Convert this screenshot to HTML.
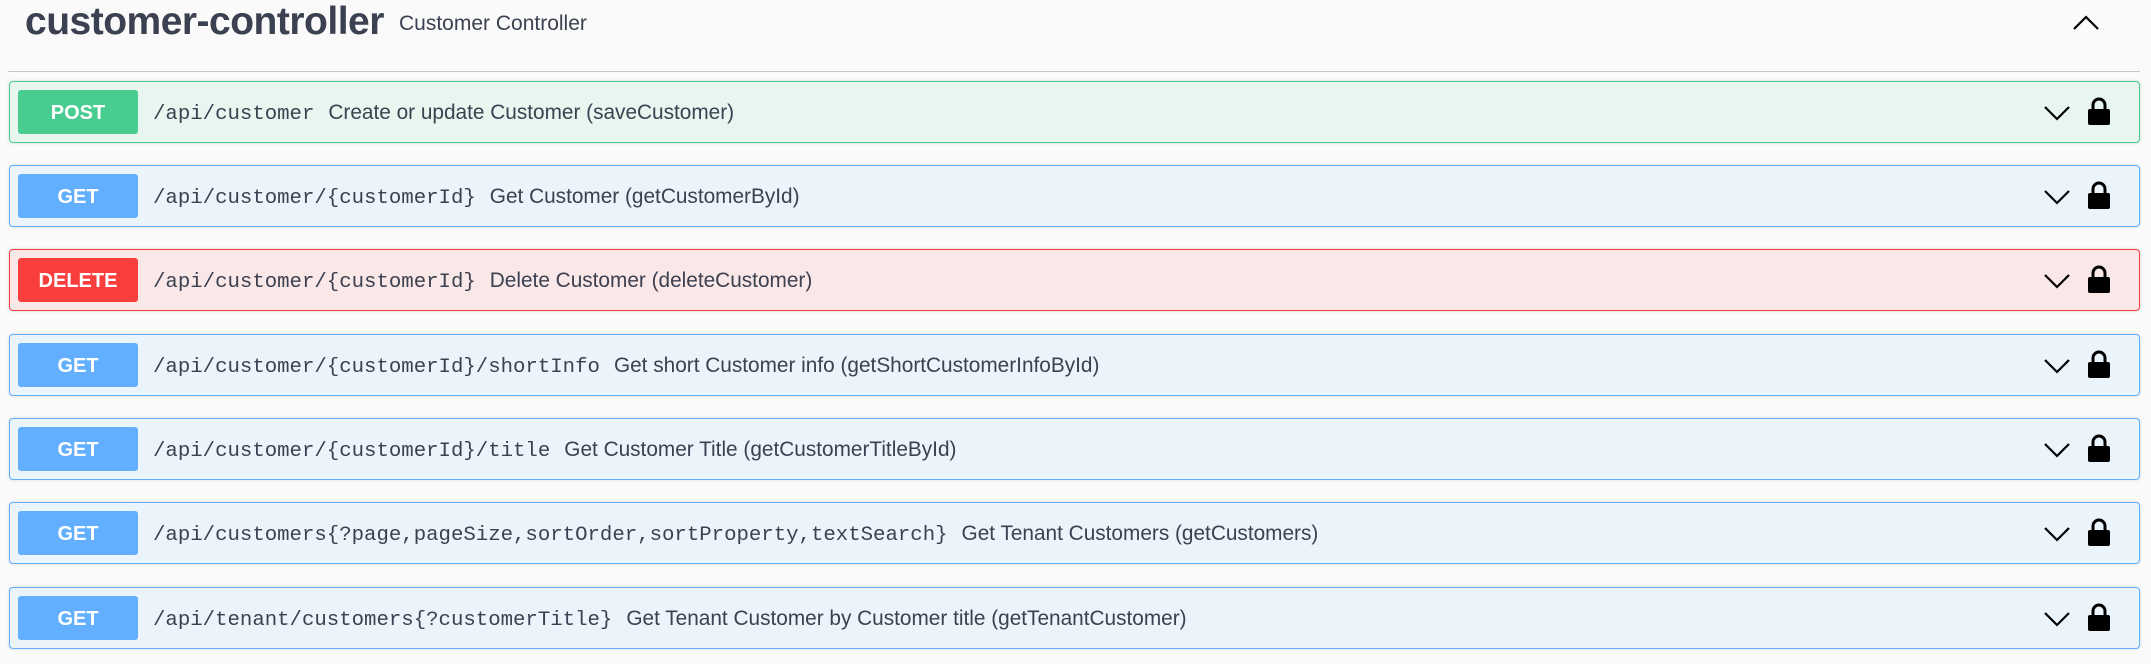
<!DOCTYPE html>
<html><head><meta charset="utf-8"><style>
body{margin:0;width:2151px;height:664px;background:#fafafa;font-family:"Liberation Sans","Noto Sans CJK SC",sans-serif;color:#3b4151;overflow:hidden;position:relative}
.h{position:absolute;left:25px;top:0px;font-size:39px;font-weight:bold;letter-spacing:-0.5px}
.sub{position:absolute;left:399px;top:12px;font-size:21px}
.up{position:absolute;left:2072px;top:14px}
.line{position:absolute;left:8px;width:2132px;top:71px;height:1px;background:#c8c8c8}
.op{position:absolute;left:9px;width:2129px;height:60px;border:1px solid;border-radius:4px;box-shadow:0 0 3px rgba(0,0,0,.15)}
.b{position:absolute;left:8px;top:8px;width:120px;height:44px;border-radius:3px;color:#fff;font-weight:bold;font-size:20px;text-align:center;line-height:47px}
.p{position:absolute;left:143px;top:19px;font-family:"Liberation Mono",monospace;font-size:20.7px;color:#3b4151;white-space:nowrap}
.p span{font-family:"Liberation Sans",sans-serif;font-size:20.8px;margin-left:14px}
.dn{position:absolute;left:2033px;top:22px}
.lk{position:absolute;left:2077px;top:14px}
.post{background:#e8f6f0;border-color:#49cc90}.post .b{background:#49cc90}
.get{background:#ebf3fb;border-color:#61affe}.get .b{background:#61affe}
.del{background:#fae7e7;border-color:#f93e3e}.del .b{background:#f93e3e}
</style></head><body>
<div class="h">customer-controller</div>
<div class="sub">Customer Controller</div>
<svg class="up" width="28" height="18" viewBox="0 0 28 18"><path d="M2 15 L14 3 L26 15" fill="none" stroke="#000" stroke-width="2.2"/></svg>
<div class="line"></div>
<svg width="0" height="0" style="position:absolute"><defs>
<symbol id="d" viewBox="0 0 28 18"><path d="M2 3 L14 15 L26 3" fill="none" stroke="#000" stroke-width="2.2"/></symbol>
<symbol id="l" viewBox="0 0 24 30"><path d="M6 14 V9 a6 6 0 0 1 12 0 V14" fill="none" stroke="#000" stroke-width="3"/><rect x="1" y="13" width="22" height="16" rx="2" fill="#000"/></symbol>
</defs></svg>

<div class="op post" style="top:81px"><div class="b">POST</div><div class="p">/api/customer<span>Create or update Customer (saveCustomer)</span></div><svg class="dn" width="28" height="18"><use href="#d"/></svg><svg class="lk" width="24" height="30"><use href="#l"/></svg></div>
<div class="op get" style="top:165px"><div class="b">GET</div><div class="p">/api/customer/{customerId}<span>Get Customer (getCustomerById)</span></div><svg class="dn" width="28" height="18"><use href="#d"/></svg><svg class="lk" width="24" height="30"><use href="#l"/></svg></div>
<div class="op del" style="top:249px"><div class="b">DELETE</div><div class="p">/api/customer/{customerId}<span>Delete Customer (deleteCustomer)</span></div><svg class="dn" width="28" height="18"><use href="#d"/></svg><svg class="lk" width="24" height="30"><use href="#l"/></svg></div>
<div class="op get" style="top:334px"><div class="b">GET</div><div class="p">/api/customer/{customerId}/shortInfo<span>Get short Customer info (getShortCustomerInfoById)</span></div><svg class="dn" width="28" height="18"><use href="#d"/></svg><svg class="lk" width="24" height="30"><use href="#l"/></svg></div>
<div class="op get" style="top:418px"><div class="b">GET</div><div class="p">/api/customer/{customerId}/title<span>Get Customer Title (getCustomerTitleById)</span></div><svg class="dn" width="28" height="18"><use href="#d"/></svg><svg class="lk" width="24" height="30"><use href="#l"/></svg></div>
<div class="op get" style="top:502px"><div class="b">GET</div><div class="p">/api/customers{?page,pageSize,sortOrder,sortProperty,textSearch}<span>Get Tenant Customers (getCustomers)</span></div><svg class="dn" width="28" height="18"><use href="#d"/></svg><svg class="lk" width="24" height="30"><use href="#l"/></svg></div>
<div class="op get" style="top:587px"><div class="b">GET</div><div class="p">/api/tenant/customers{?customerTitle}<span>Get Tenant Customer by Customer title (getTenantCustomer)</span></div><svg class="dn" width="28" height="18"><use href="#d"/></svg><svg class="lk" width="24" height="30"><use href="#l"/></svg></div>
</body></html>
